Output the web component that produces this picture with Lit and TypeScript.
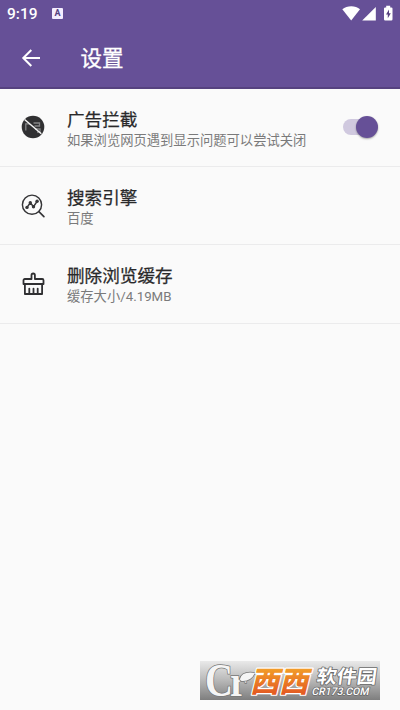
import { LitElement, html, css, svg } from "lit";
import { customElement, property } from "lit/decorators.js";

const blockIcon = svg`
  <circle cx="12" cy="12" r="11.3" fill="#303032"/>
  <path d="M4.8 15.5V8.8H9M12.5 8h6v3h-5M14 14h5v3h-3" fill="none" stroke="#858587" stroke-width="1.3"/>
  <path d="M3.6 4.5L20.3 18.8" stroke="#f4f4f4" stroke-width="1.5"/>`;
const searchIcon = svg`
  <g fill="none" stroke="#353537" stroke-width="1.45" stroke-linecap="round">
    <circle cx="11" cy="10.7" r="9.6"/>
    <path d="M17.9 17.6L22.9 22.6" stroke-width="1.7"/>
    <path d="M6 13.4L9.3 8.7L12.5 12.7L16.1 7.3" stroke-width="1.5"/>
  </g>
  <g fill="#353537"><circle cx="6" cy="13.4" r="1.7"/><circle cx="9.3" cy="8.7" r="1.7"/><circle cx="12.5" cy="12.7" r="1.7"/><circle cx="16.1" cy="7.3" r="1.7"/></g>`;
const brushIcon = svg`
  <g fill="none" stroke="#303032" stroke-width="1.8" stroke-linejoin="round" stroke-linecap="round">
    <path d="M10.5 7V3.2a1.7 1.7 0 0 1 3.4 0V7h7.3a1.3 1.3 0 0 1 1.3 1.3V12h-20V8.3A1.3 1.3 0 0 1 3.8 7z"/>
    <path d="M3.9 12v10h17.2V12M8.3 16.6v5M12.5 16.6v5M16.7 16.6v5"/>
  </g>`;

@customElement("setting-row")
class SettingRow extends LitElement {
  @property() heading = "";
  @property() detail = "";
  @property({ attribute: false }) icon: unknown;

  static styles = css`
    :host { display: flex; align-items: center; box-sizing: border-box; height: 78.3px; padding: 0 21px; border-bottom: 1px solid #ebebec; }
    .icon { width: 24px; height: 24px; flex: none; margin-right: 22px; overflow: visible; }
    .copy { flex: 1; white-space: nowrap; padding-top: 4px; }
    .heading { font-size: 17.6px; line-height: 22px; color: #29292a; -webkit-text-stroke: .25px #29292a; }
    .detail { font-size: 13.3px; line-height: 19px; color: #7a7a7b; }
  `;
  render() {
    return html`<svg class="icon" viewBox="0 0 24 24">${this.icon}</svg>
      <div class="copy"><div class="heading">${this.heading}</div><div class="detail">${this.detail}</div></div><slot></slot>`;
  }
}

@customElement("app-root")
class AppRoot extends LitElement {
  static styles = css`
    :host { display: flex; flex-direction: column; position: relative; height: 710px; overflow: hidden; background: #fafafa; font-family: Roboto, "Noto Sans CJK SC", sans-serif; }
    .header { box-sizing: border-box; height: 88.7px; background: #665097; border-bottom: 2px solid #56427f; color: #fff; }
    .status { display: flex; align-items: center; height: 27px; padding: 0 6px 0 7px; }
    .time { font-size: 15.5px; font-weight: 500; width: 45px; }
    .badge { width: 11px; height: 11px; border-radius: 1px; background: #f4edff; color: #57417f; font-size: 9px; line-height: 11px; font-weight: 700; text-align: center; }
    .signals { width: 54px; height: 20px; margin-left: auto; }
    .bar { display: flex; align-items: center; height: 61px; padding-left: 21px; }
    .back { width: 20px; height: 20px; margin-right: 39.6px; }
    .title { font-size: 21.5px; line-height: 30px; padding-top: 2px; -webkit-text-stroke: .3px #fff; }
    .switch { display: flex; align-items: center; width: 36px; height: 24px; }
    .track { box-sizing: border-box; width: 32px; height: 16px; border-radius: 8px; background: #d0c9df; }
    .thumb { width: 22px; height: 22px; flex: none; border-radius: 50%; margin-left: -19px; background: #665097; box-shadow: 0 1px 2px #0005; }
    .watermark { position: absolute; left: 200px; top: 661px; width: 180px; height: 39px; }
  `;
  render() {
    return html`
      <div class="header">
        <div class="status">
          <span class="time">9:19</span><span class="badge">A</span>
          <svg class="signals" viewBox="0 0 54 20" fill="#fff">
            <path d="M2.3 5.2C7 1.1 15.5 1.1 20 5.2L11.2 16.4Z"/>
            <path d="M35.8 3V16.4H22.2Z"/>
            <path d="M46.2 1.8h4v1.6h1.1q1.2 0 1.2 1.2v10.6q0 1.2-1.2 1.2h-6.1q-1.2 0-1.2-1.2V4.6q0-1.2 1.2-1.2h1z"/>
            <path d="M49 5.5l-3 5h1.8v3.7l3-5H49z" fill="#57417f"/>
          </svg>
        </div>
        <div class="bar">
          <svg class="back" viewBox="0 0 20 20" fill="none" stroke="#fff" stroke-width="2"><path d="M19 10H2.5M10.3 2L2.3 10l8 8"/></svg>
          <span class="title">设置</span>
        </div>
      </div>
      <setting-row heading="广告拦截" detail="如果浏览网页遇到显示问题可以尝试关闭" .icon=${blockIcon}>
        <div class="switch"><div class="track"></div><div class="thumb"></div></div>
      </setting-row>
      <setting-row heading="搜索引擎" detail="百度" .icon=${searchIcon}></setting-row>
      <setting-row heading="删除浏览缓存" detail="缓存大小/4.19MB" .icon=${brushIcon}></setting-row>
      <svg class="watermark" viewBox="0 0 180 39">
        <defs>
          <linearGradient id="plate" x2="0" y2="1"><stop stop-color="#e9e9e9"/><stop offset=".45" stop-color="#bdbdbd"/><stop offset="1" stop-color="#7e7e7e"/></linearGradient>
          <linearGradient id="orange" x2="0" y2="1"><stop stop-color="#f8b82c"/><stop offset="1" stop-color="#df4a20"/></linearGradient>
        </defs>
        <rect width="180" height="39" fill="url(#plate)"/>
        <g fill="#f5f5f5" stroke="#777" stroke-width="1.6" paint-order="stroke" font-family="Liberation Serif, serif" font-weight="700">
          <text x="5" y="35" font-size="46" textLength="28" lengthAdjust="spacingAndGlyphs">C</text>
          <text x="30" y="35" font-size="45" textLength="17" lengthAdjust="spacingAndGlyphs">r</text>
          <path d="M40 18Q42 10 55 12Q51 20 43 20Q40 20 40 18Z"/>
        </g>
        <g fill="url(#orange)" stroke="#fff" stroke-width="2.4" stroke-linejoin="round" paint-order="stroke" font-family="Noto Sans CJK SC, sans-serif" font-weight="900">
          <text transform="translate(50 31) skewX(-14)" font-size="29">西</text>
          <text transform="translate(79 31) skewX(-14)" font-size="29">西</text>
        </g>
        <g fill="#fff" stroke="#6b6b6b" stroke-width="1.6" stroke-linejoin="round" paint-order="stroke" font-weight="700">
          <text transform="translate(116 22) skewX(-8)" font-family="Noto Sans CJK SC, sans-serif" font-size="18.5" textLength="60" lengthAdjust="spacingAndGlyphs">软件园</text>
          <text transform="translate(111.5 34) skewX(-12)" font-family="Roboto, sans-serif" font-size="10.5" font-weight="500" textLength="57" lengthAdjust="spacingAndGlyphs">CR173.COM</text>
        </g>
      </svg>`;
  }
}
